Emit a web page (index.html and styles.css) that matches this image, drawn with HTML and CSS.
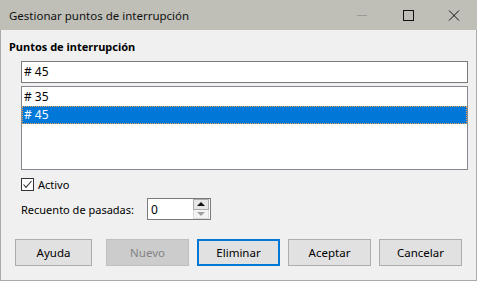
FILE: index.html
```html
<!DOCTYPE html>
<html>
  <head>
    <meta charset="utf-8">
    <title>Gestionar puntos de interrupción</title>
    <meta name="viewport" content="width=device-width,initial-scale=1">
    <link rel="stylesheet" href="styles.css">
  </head>
  <body>
    <div class="window">
      <div class="titlebar">
        <span class="title">Gestionar puntos de interrupción</span>
        <div class="controls">
          <svg class="ctl min" width="46" height="30" viewBox="0 0 46 30"><path d="M18 15.5h10" stroke="#9b9b96" stroke-width="1"/></svg>
          <svg class="ctl" width="46" height="30" viewBox="0 0 46 30"><rect x="18.5" y="10.5" width="10" height="10" fill="none" stroke="#111" stroke-width="1"/></svg>
          <svg class="ctl" width="46" height="30" viewBox="0 0 46 30"><path d="M18 10.5l10 10M28 10.5l-10 10" stroke="#111" stroke-width="1"/></svg>
        </div>
      </div>

      <div class="content">
        <div class="section-label">Puntos de interrupción</div>
        <div class="entry"># 45</div>
        <ul class="list">
          <li># 35</li>
          <li class="selected"># 45</li>
        </ul>

        <div class="check">
          <span class="box">
            <svg width="11" height="11" viewBox="0 0 11 11"><path d="M1.5 5.5l2.5 2.8 5.5-6.3" fill="none" stroke="#333" stroke-width="1.1"/></svg>
          </span>
          <span>Activo</span>
        </div>

        <div class="count">
          <span class="count-label">Recuento de pasadas:</span>
          <div class="spin">
            <span class="spin-value">0</span>
            <div class="arrows">
              <span class="arrow up"></span>
              <span class="arrow down"></span>
            </div>
          </div>
        </div>

        <div class="buttons">
          <button class="btn help">Ayuda</button>
          <button class="btn disabled">Nuevo</button>
          <button class="btn default">Eliminar</button>
          <button class="btn">Aceptar</button>
          <button class="btn">Cancelar</button>
        </div>
      </div>
    </div>
  </body>
</html>
```

FILE: styles.css
```css
html, body {
  margin: 0;
  padding: 0;
  background: #f0f0f0;
}
body {
  font-family: "Noto Sans", "Open Sans", sans-serif;
  font-size: 11px;
  color: #000;
}
.window {
  width: 477px;
  height: 281px;
  box-sizing: border-box;
  border: 1px solid #aaaaaa;
  border-top: none;
  display: flex;
  flex-direction: column;
  background: #f0f0f0;
}
.titlebar {
  height: 30px;
  flex: none;
  background: #bfbfb8;
  display: flex;
  align-items: center;
  justify-content: space-between;
  margin: 0 -1px;
}
.title {
  padding-left: 9px;
  font-size: 11.5px;
  color: #111;
}
.controls {
  display: flex;
  height: 30px;
}
.ctl {
  display: block;
}
.content {
  flex: 1;
  display: flex;
  flex-direction: column;
  padding: 0 8px 0 20px;
}
.section-label {
  font-weight: bold;
  margin: 9px 0 0 -12px;
  line-height: 16px;
  height: 16px;
}
.entry {
  margin-top: 6px;
  height: 22px;
  box-sizing: border-box;
  border: 1px solid #7a7a7a;
  background: #fff;
  line-height: 20px;
  padding-left: 2px;
  font-size: 12px;
}
.list {
  list-style: none;
  margin: 3px 0 0 0;
  padding: 1px 0 0 0;
  height: 84px;
  box-sizing: border-box;
  border: 1px solid #828790;
  background: #fff;
  font-size: 12px;
}
.list li {
  height: 18px;
  line-height: 18px;
  padding-left: 2px;
  box-sizing: border-box;
}
.list li.selected {
  background: #0078d7;
  color: #fff;
  outline: 1px dotted #f0a050;
  outline-offset: -1px;
}
.check {
  margin-top: 7px;
  display: flex;
  align-items: center;
  gap: 4px;
  height: 14px;
}
.box {
  width: 13px;
  height: 13px;
  box-sizing: border-box;
  border: 1px solid #333;
  background: #fff;
  display: flex;
  align-items: center;
  justify-content: center;
}
.box svg {
  display: block;
}
.count {
  margin-top: 7px;
  display: flex;
  align-items: center;
}
.count-label {
  width: 126px;
}
.spin {
  width: 64px;
  height: 22px;
  box-sizing: border-box;
  border: 1px solid #7a7a7a;
  background: #fff;
  display: flex;
  align-items: center;
  justify-content: space-between;
  font-size: 12px;
}
.spin-value {
  padding-left: 3px;
}
.arrows {
  display: flex;
  flex-direction: column;
  height: 20px;
  width: 16px;
  margin-right: 1px;
}
.arrow {
  flex: 1;
  position: relative;
  background: #ececec;
  border: 1px solid #b8b8b8;
}
.arrow.up {
  background: #e6e6e6;
  border-color: #acacac;
}
.arrow.down {
  border-top: none;
  background: #f3f3f3;
  border-color: #dcdcdc;
}
.arrow::after {
  content: "";
  position: absolute;
  left: 50%;
  top: 50%;
  margin-left: -4px;
  border-left: 4px solid transparent;
  border-right: 4px solid transparent;
}
.arrow.up::after {
  margin-top: -2px;
  border-bottom: 4px solid #111;
}
.arrow.down::after {
  margin-top: -2px;
  border-top: 4px solid #a0a0a0;
}
.buttons {
  margin-top: auto;
  margin-bottom: 14px;
  margin-left: -6px;
  display: flex;
  gap: 8px;
}
.btn {
  font-family: inherit;
  font-size: 11.5px;
  width: 83px;
  height: 27px;
  box-sizing: border-box;
  border: 1px solid #adadad;
  background: #e1e1e1;
  color: #000;
  padding: 0;
}
.btn.help {
  width: 77px;
  margin-right: 6px;
}
.btn.disabled {
  background: #cccccc;
  border-color: #bfbfbf;
  color: #838383;
}
.btn.default {
  border: 2px solid #0078d7;
}
```
